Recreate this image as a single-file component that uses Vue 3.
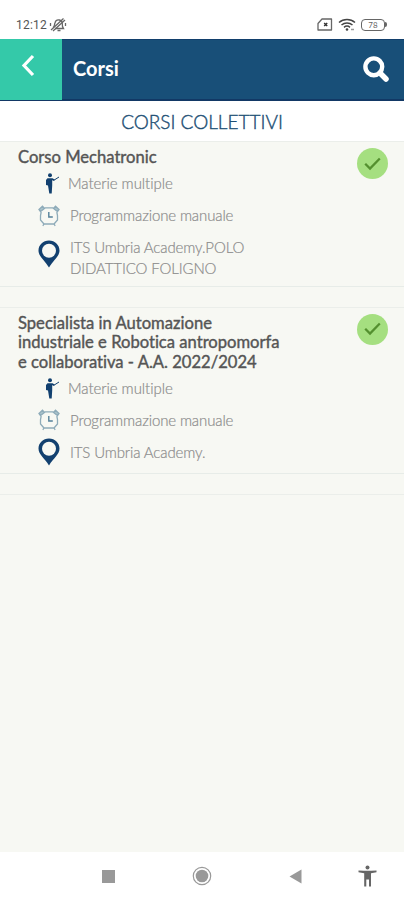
<template>
    <div class="screen">
        <div class="status-bar">
            <div class="status-left">
                <span class="clock">12:12</span>
                <svg class="mute-icon" width="18" height="16" viewBox="0 0 18 16" fill="none" stroke="#666666" stroke-width="1.300">
                    <path d="M4 10.500c1.700-1 1.300-3 2-4.800C6.700 3.500 8.500 2.500 10.500 3s3 2 2.800 4c-.2 1.800.2 3 1.200 4.500H6" />
                    <path d="M2 13L14.500 1.500M4 14L16 3M8.500 13.500h3M1.500 6v3M16.500 6v3" />
                </svg>
            </div>
            <div class="status-right">
                <svg width="16" height="13" viewBox="0 0 16 13" fill="none" stroke="#666666" stroke-width="1.300">
                    <path d="M5 1h9.500v11H1V5.500z" stroke-linejoin="round" />
                    <path d="M7.200 5l3 3M10.200 5l-3 3" stroke="#333333" stroke-width="1.500" />
                </svg>
                <svg width="18" height="14" viewBox="0 0 18 14" fill="none" stroke="#444444" stroke-width="1.500">
                    <path d="M1 4.500c4.500-4 11.500-4 16 0M3.500 7c3.200-2.800 7.800-2.800 11 0M6 9.300c1.800-1.500 4.200-1.500 6 0" />
                    <circle cx="9" cy="11.500" r="1.300" fill="#444444" stroke="none" />
                    <path d="M13 11.500h3" stroke="#999999" />
                </svg>
                <div class="battery">
                    <span class="battery-body">78</span>
                    <span class="battery-cap"></span>
                </div>
            </div>
        </div>

        <header class="app-header">
            <button class="back-btn" aria-label="Indietro">
                <svg width="14" height="23" viewBox="0 0 14 23" fill="none" stroke="#ffffff" stroke-width="3.200">
                    <path d="M12 2L3 11.500L12 21" />
                </svg>
            </button>
            <h1 class="header-title">Corsi</h1>
            <button class="search-btn" aria-label="Cerca">
                <svg width="26" height="26" viewBox="0 0 26 26" fill="none" stroke="#ffffff">
                    <circle cx="10.800" cy="10.800" r="8.400" stroke-width="4.400" />
                    <path d="M17 17L23 23" stroke-width="5.500" stroke-linecap="round" />
                </svg>
            </button>
        </header>

        <h2 class="section-title">CORSI COLLETTIVI</h2>

        <main class="course-list">
            <article class="course" v-for="course in courses" :key="course.id">
                <h3 class="course-title">
                    <span v-for="line in course.title" :key="line">{{ line }}</span>
                </h3>
                <div class="course-row subject">
                    <svg class="row-icon" width="15" height="21" viewBox="0 0 15 21">
                        <circle cx="5" cy="2.300" r="2" fill="#12406f" />
                        <path d="M2.500 5.300h5l2.200 1.200-.6 1.300-1.900-.5v5.200l-.5 8H4.300L3 12.500l-2-.4V7z" fill="#12406f" />
                        <path d="M8.500 7.500L14 4" stroke="#12406f" stroke-width="1" />
                    </svg>
                    <p class="row-text">Materie multiple</p>
                </div>
                <div class="course-row">
                    <svg class="row-icon" width="22" height="22" viewBox="0 0 22 22" fill="none" stroke="#8eabb9" stroke-width="1.300">
                        <path d="M6.500 2.800h9M18.800 7l.7 3.500v4.500l-3.500 4H6l-3.500-4v-4.500L3.200 7" />
                        <path d="M6 19l-1.200 1.800M16 19l1.200 1.800" />
                        <path d="M1 4.500L4.500 1.200L6.500 3.500L2.500 6.500zM21 4.500L17.500 1.200L15.500 3.500L19.500 6.500z" fill="#a9c3cb" />
                        <path d="M10.800 7v5h4" stroke="#54809a" stroke-width="1.400" />
                    </svg>
                    <p class="row-text">Programmazione manuale</p>
                </div>
                <div class="course-row place">
                    <svg class="row-icon" width="22" height="28" viewBox="0 0 22 28">
                        <path d="M11 .5C5 .5.500 5 .500 10.500c0 6 6 9.500 10.500 17 4.500-7.500 10.500-11 10.500-17C21.500 5 17 .5 11 .5z" fill="#12406f" />
                        <circle cx="11" cy="10.700" r="7" fill="#f7f8f3" />
                    </svg>
                    <p class="row-text">
                        <span v-for="line in course.location" :key="line">{{ line }}</span>
                    </p>
                </div>
                <span class="check-badge">
                    <svg width="17" height="14" viewBox="0 0 17 14" fill="none" stroke="#54902f" stroke-width="2.300">
                        <path d="M1.200 6.800L6 11.500L15.800 1.500" />
                    </svg>
                </span>
            </article>
        </main>

        <nav class="system-nav">
            <span class="nav-cell"><i class="nav-square"></i></span>
            <span class="nav-cell">
                <svg width="20" height="20" viewBox="0 0 20 20">
                    <circle cx="10" cy="10" r="8.700" fill="none" stroke="#999999" stroke-width="1.200" />
                    <circle cx="10" cy="10" r="6.300" fill="#999999" />
                </svg>
            </span>
            <span class="nav-cell">
                <svg width="13" height="15" viewBox="0 0 13 15"><path d="M12.500.500v14L.500 7.500z" fill="#999999" /></svg>
            </span>
            <span class="nav-cell">
                <svg width="19" height="22" viewBox="0 0 19 22" fill="#666666">
                    <circle cx="9.500" cy="2.500" r="2" />
                    <path d="M.5 5.500l5.500.3h7l5.500-.3v1.800L13 8.200V21.500h-2V14.500H8.300v7H6.200V8.200L.5 7.300z" />
                </svg>
            </span>
        </nav>
    </div>
</template>

<script setup>
// elenco dei corsi collettivi
const courses = [
    {
        id: 1,
        title: ['Corso Mechatronic'],
        location: ['ITS Umbria Academy.POLO', 'DIDATTICO FOLIGNO']
    },
    {
        id: 2,
        title: ['Specialista in Automazione', 'industriale e Robotica antropomorfa', 'e collaborativa - A.A. 2022/2024'],
        location: ['ITS Umbria Academy.']
    }
];
</script>

<style>
body {
    margin: 0;
    background-color: #f7f8f3;
}
</style>

<style scoped>
.screen {
    display: flex;
    flex-direction: column;
    width: 404px;
    height: 900px;
    overflow: hidden;
    background-color: #f7f8f3;
    font-family: Lato, "Liberation Sans", sans-serif;
    font-variant-ligatures: none;
}

.screen * {
    box-sizing: border-box;
}

.screen svg {
    display: block;
    flex: none;
}

h1,
h2,
h3,
p {
    margin: 0;
}

button {
    display: flex;
    align-items: center;
    justify-content: center;
    padding: 0;
    border: none;
    background: none;
}

/* barra di stato */
.status-bar {
    display: flex;
    flex: none;
    justify-content: space-between;
    height: 39px;
    padding: 11px 17px 0 16px;
    background-color: #ffffff;
}

.status-left,
.status-right {
    display: flex;
    align-items: center;
    height: 27px;
}

.status-right {
    gap: 5px;
}

.clock {
    color: #555555;
    font-family: Roboto, sans-serif;
    font-size: 12px;
    letter-spacing: 0.2px;
}

.mute-icon {
    margin-left: 2px;
}

.battery {
    display: flex;
    align-items: center;
}

.battery-body {
    width: 24px;
    height: 12px;
    border: 1.5px solid #666666;
    border-radius: 4px;
    color: #666666;
    font-size: 8px;
    line-height: 10px;
    text-align: center;
}

.battery-cap {
    width: 2px;
    height: 5px;
    background-color: #666666;
    border-radius: 0 2px 2px 0;
}

/* intestazione */
.app-header {
    display: flex;
    flex: none;
    align-items: center;
    height: 62px;
    background-color: #184f78;
    border-top: 1px solid #123f6c;
    border-bottom: 2px solid #123865;
}

.back-btn {
    width: 62px;
    height: 61px;
    padding: 0 7px 8px 0;
    background-color: #34c9a9;
}

.header-title {
    flex: 1;
    padding: 0 0 4px 11px;
    color: #ffffff;
    font-size: 20px;
    font-weight: 700;
    line-height: 24px;
}

.search-btn {
    margin: 0 15px 2px 0;
}

.section-title {
    flex: none;
    height: 40px;
    background-color: #ffffff;
    color: #1d4f74;
    font-size: 19px;
    font-weight: 300;
    line-height: 41px;
    text-align: center;
    -webkit-text-stroke: 0.4px #1d4f74;
}

/* lista corsi */
.course-list {
    flex: 1;
}

.course {
    position: relative;
    margin-bottom: 19.5px;
    padding: 6px 18px 4.5px;
    border-top: 1px solid #ebeeea;
    border-bottom: 1px solid #e7ece8;
}

.course:last-child {
    margin-bottom: 0;
}

.course:last-child::after {
    content: '';
    position: absolute;
    right: 0;
    bottom: -22px;
    left: 0;
    height: 1px;
    background-color: #ebeeea;
}

.course-title {
    color: #555555;
    font-size: 16.600px;
    font-weight: 400;
    line-height: 19.500px;
    -webkit-text-stroke: 0.400px #555555;
}

.course-title span,
.row-text span {
    display: block;
    white-space: nowrap;
}

.course-row {
    display: flex;
    align-items: center;
    min-height: 32px;
    padding-left: 20px;
}

.subject {
    padding-left: 27px;
}

.row-text {
    margin-left: 10px;
    color: #8c8c8c;
    font-size: 15px;
    font-weight: 300;
    line-height: 21px;
    letter-spacing: -0.12px;
    -webkit-text-stroke: 0.200px #8c8c8c;
}

.subject .row-text {
    margin-left: 8px;
    letter-spacing: -0.05px;
}

/* le sedi su due righe hanno bisogno di più spazio */
.course:first-child .place .row-text {
    padding-top: 5px;
    padding-bottom: 3px;
}

.course:first-child .place .row-icon {
    margin-bottom: 5px;
}

.check-badge {
    position: absolute;
    top: 6px;
    right: 16px;
    display: flex;
    align-items: center;
    justify-content: center;
    width: 31px;
    height: 31px;
    border-radius: 50%;
    background-color: #a5df80;
}

/* barra di navigazione di sistema */
.system-nav {
    display: grid;
    flex: none;
    grid-template-columns: 94px 94px 92px 52px;
    height: 48px;
    padding-left: 61px;
    background-color: #ffffff;
}

.nav-cell {
    display: flex;
    align-items: center;
    justify-content: center;
}

.nav-square {
    width: 13px;
    height: 13px;
    background-color: #999999;
}
</style>
